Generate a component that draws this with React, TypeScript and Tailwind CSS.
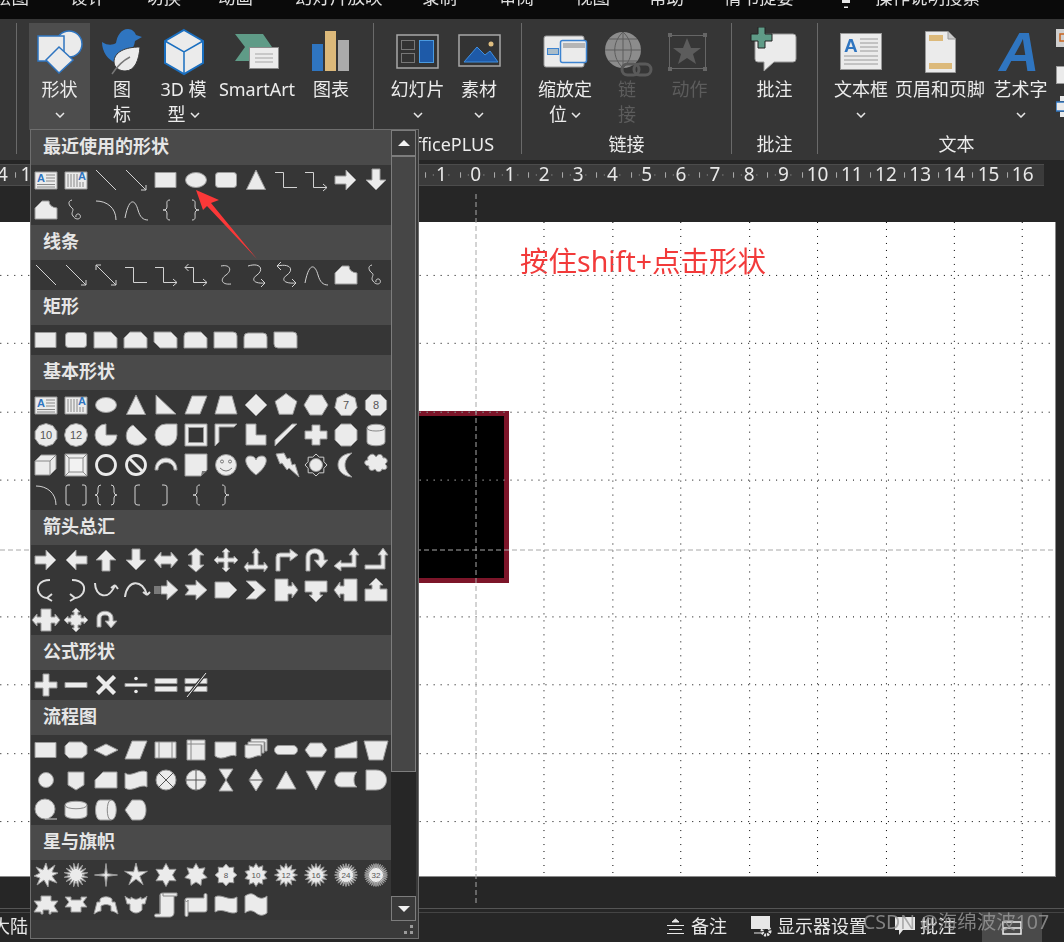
import React from 'react';

const W = '#ebebeb';
const G = '#9a9a9a';
const BLUE = '#2f75c0';

const F = ({ d }: { d: string }) => <path d={d} fill={W} stroke={G} />;
const L = ({ d, c = '#d2d2d2', w = 1 }: { d: string; c?: string; w?: number }) => <path d={d} fill="none" stroke={c} strokeWidth={w} />;
const N = ({ t, s = 9 }: { t: string; s?: number }) => (
  <text x={15} y={15 + s * 0.36} textAnchor="middle" fontSize={s} fill="#555" fontFamily="Liberation Sans, sans-serif">{t}</text>
);

const ngon = (n: number, r: number, rot = 0) =>
  'M' + Array.from({ length: n }, (_, i) => {
    const a = rot + (i * 2 * Math.PI) / n - Math.PI / 2;
    return `${(15 + r * Math.cos(a)).toFixed(1)} ${(15 + r * Math.sin(a)).toFixed(1)}`;
  }).join('L') + 'z';

const star = (n: number, R: number, r: number, rot = 0) =>
  'M' + Array.from({ length: n * 2 }, (_, i) => {
    const a = rot + (i * Math.PI) / n - Math.PI / 2;
    const q = i % 2 ? r : R;
    return `${(15 + q * Math.cos(a)).toFixed(1)} ${(15 + q * Math.sin(a)).toFixed(1)}`;
  }).join('L') + 'z';

const shapes: Record<string, React.ReactNode> = {
  textH: <><path d="M4 7h22v17H4z" fill={W} stroke={G} /><text x={6} y={17} fontSize={11} fontWeight={700} fill={BLUE} fontFamily="Liberation Sans, sans-serif">A</text><L c="#888" d="M15 10h9M15 13h9M15 16h9M6 19.500h18M6 22h18" /></>,
  textV: <><path d="M4 7h22v17H4z" fill={W} stroke={G} /><text x={17} y={15} fontSize={11} fontWeight={700} fill={BLUE} fontFamily="Liberation Sans, sans-serif">A</text><L c="#888" d="M7 9v13M10 9v13M13 9v13M16 9v13M19 17v5M22 17v5" /></>,
  line: <L d="M5 5L25 25" />,
  arrowLine: <L d="M5 5L25 25M25 20v5h-5" />,
  dblLine: <L d="M5 5L25 25M25 20v5h-5M10 5H5v5" />,
  rect: <F d="M4 7.500h21v15H4z" />,
  ellipse: <ellipse cx={15} cy={15} rx={10.500} ry={7.500} fill={W} stroke={G} />,
  rrect: <rect x={4.500} y={7.500} width={21} height={15} rx={3} fill={W} stroke={G} />,
  tri: <F d="M15 5L24.500 24.500H5.500z" />,
  elbow: <L d="M4 7.500H12.500V22.500H26" />,
  elbowA: <L d="M4 7.500H12.500V22.500H26M22 19l4 3.500-4 3.500" />,
  elbowD: <L d="M4 7.500H12.500V22.500H26M22 19l4 3.500-4 3.500M7.500 4L4 7.500 7.500 11" />,
  rArrow: <F d="M4 11H15V5L25 15 15 25V19H4z" />,
  lArrow: <F d="M26 11H15V5L5 15 15 25V19H26z" />,
  uArrow: <F d="M11 26V15H5L15 5 25 15H19V26z" />,
  dArrow: <F d="M11 4V15H5L15 25 25 15H19V4z" />,
  free: <F d="M4 24V13L11 6H18Q18 12 26 13V24z" />,
  scribble: <L d="M11 5C6 6 8 11 11 13C14 15 9 18 12 21C15 26 21 24 19 20C18 18 14 19 15 22" />,
  arc: <L d="M5 6C16 6 25 13 25 25" />,
  curve: <L d="M4 23C8 2 14 4 17 15C19 22 22 25 27 25" />,
  lBrace: <L d="M19 5C15 5 16 8 16 11C16 14 15 15 12 15C15 15 16 16 16 19C16 22 15 25 19 25" />,
  rBrace: <L d="M11 5C15 5 14 8 14 11C14 14 15 15 18 15C15 15 14 16 14 19C14 22 15 25 11 25" />,
  cConn: <L d="M10 6C20 4 21 11 15 15C9 19 10 25 20 24" />,
  cConnA: <L d="M7 6C20 2 23 10 16 15C10 19 12 24 24 23M20 19l4 4-4 4" />,
  cConnD: <L d="M6 6C20 3 23 10 16 15C10 19 12 24 25 23M21 19l4 4-4 4M10 2L6 6l4 4" />,
  snip1: <F d="M3 7h17l6 6v10H3z" />,
  snip2: <F d="M9 7H20l6 6v10H3V13z" />,
  snipD: <F d="M3 7H20l6 6v10H9l-6-6z" />,
  snipR: <F d="M3 11q0-4 4-4H20l6 6v10H3z" />,
  round1: <path d="M3 7H22q4 0 4 4v12H3z" fill={W} stroke={G} />,
  round2: <path d="M7 8H22q4 0 4 4v11H3V12q0-4 4-4z" fill={W} stroke={G} />,
  roundD: <path d="M3 7H22q4 0 4 4v12H7q-4 0-4-4z" fill={W} stroke={G} />,
  rtTri: <F d="M5 5L25 24H5z" />,
  para: <F d="M11 6H26L19 24H4z" />,
  trap: <F d="M9 6H21L26 24H4z" />,
  diamond: <F d="M15 4L26 15 15 26 4 15z" />,
  pent: <F d={ngon(5, 11.500)} />,
  hex: <F d="M9 5H21L27 15 21 25H9L3 15z" />,
  hept: <><F d={ngon(7, 11.500)} /><N t="7" s={11} /></>,
  oct: <><F d={ngon(8, 11.500, Math.PI / 8)} /><N t="8" s={11} /></>,
  dec: <><F d={ngon(10, 11.500)} /><N t="10" s={11} /></>,
  dodec: <><F d={ngon(12, 11.500)} /><N t="12" s={11} /></>,
  pie: <F d="M15 4A11 11 0 1 0 26 15H15z" />,
  chord: <F d="M12 5C5 8 3 18 8 23C14 27 22 26 26 19z" />,
  drop: <path d="M26 4V15A11 11 0 1 1 15 4z" fill={W} stroke={G} />,
  frame: <path d="M4 4H26V26H4zM7.500 7.500V22.500H22.500V7.500z" fill={W} stroke={G} fillRule="evenodd" />,
  halfFrame: <F d="M4 4H26L23 7H8V22L4 26z" />,
  lShape: <F d="M5 4H15V15H25V25H5z" />,
  stripe: <F d="M4 20L21 4H26L4 26z" />,
  cross: <F d="M11 5H19V11H26V19H19V25H11V19H4V11H11z" />,
  plaque: <F d="M10 4H20L26 10V20L20 26H10L4 20V10z" />,
  can: <><path d="M6 8C6 3 24 3 24 8V22C24 27 6 27 6 22z" fill={W} stroke={G} /><L c="#888" d="M6 8C6 12 24 12 24 8" /></>,
  cube: <><F d="M4 11L10 5H25V19L19 25H4z" /><L c="#888" d="M4 11H19V25M19 11L25 5" /></>,
  bevel: <><F d="M4 4H26V26H4z" /><path d="M8 8H22V22H8z" fill="#f2f2f2" stroke="#888" /><L c="#888" d="M4 4L8 8M26 4L22 8M4 26L8 22M26 26L22 22" /></>,
  donut: <circle cx={15} cy={15} r={9.500} fill="none" stroke={W} strokeWidth={2.800} />,
  no: <><circle cx={15} cy={15} r={9.500} fill="none" stroke={W} strokeWidth={2.800} /><path d="M9 9L21 21" stroke={W} strokeWidth={2.800} /></>,
  blockArc: <path d="M4 20C4 4 26 4 26 20H23C23 10 7 10 7 20z" fill={W} stroke={G} />,
  fold: <><F d="M4 4H26V20L20 26H4z" /><path d="M20 26L21 21H26z" fill="#777" /></>,
  smile: <><circle cx={15} cy={15} r={10.500} fill={W} stroke={G} /><circle cx={11} cy={11.500} r={1.500} fill="none" stroke="#777" /><circle cx={19} cy={11.500} r={1.500} fill="none" stroke="#777" /><L c="#777" d="M9 18Q15 24 21 18" /></>,
  heart: <F d="M15 25C2 15 3 6 9 6C12 6 14 7 15 10C16 7 18 6 21 6C27 6 28 15 15 25z" />,
  bolt: <F d="M5 4L13 3 16 9 19 8 21 15 24 14 28 27 18 18 16 20 11 13 9 14z" />,
  sun: <><circle cx={15} cy={15} r={6.500} fill={W} stroke={G} /><path d={star(8, 11, 8.500)} fill="none" stroke="#cfcfcf" /></>,
  moon: <F d="M21 3C10 4 7 10 7 15C7 20 11 26 21 27C16 23 14 19 14 15C14 11 16 7 21 3z" />,
  cloud: <F d="M9 5C12 3 14 5 15 7C17 3 22 4 22 8C26 7 28 12 24 14C28 17 25 21 21 19C20 23 15 22 14 19C11 22 7 20 8 16C3 16 2 10 7 10C6 8 7 6 9 5z" />,
  brackets: <L d="M9 5H7Q5 5 5 7V23Q5 25 7 25H9M21 5H23Q25 5 25 7V23Q25 25 23 25H21" />,
  braces: <L d="M10 5Q7 5 7 8V12Q7 15 4 15Q7 15 7 18V22Q7 25 10 25M20 5Q23 5 23 8V12Q23 15 26 15Q23 15 23 18V22Q23 25 20 25" />,
  lBracket: <L d="M19 5H17Q14 5 14 7V23Q14 25 17 25H19" />,
  rBracket: <L d="M11 5H13Q16 5 16 7V23Q16 25 13 25H11" />,
  lrArrow: <F d="M3 15L10 7V11H20V7L27 15 20 23V19H10V23z" />,
  udArrow: <F d="M15 3L23 10H19V20H23L15 27 7 20H11V10H7z" />,
  quad: <F d="M15 3L19 7H17V13H23V11L27 15 23 19V17H17V23H19L15 27 11 23H13V17H7V19L3 15 7 11V13H13V7H11z" />,
  lru: <F d="M15 3L19 8H17V20H23V17L27 22 23 27V24H7V27L3 22 7 17V20H13V8H11z" />,
  bent: <F d="M5 26V12Q5 8 9 8H19V4L27 10 19 16V12H9V26z" />,
  uturn: <F d="M5 26V12C5 1 23 1 23 12V15H27L20 23 13 15H18V12C18 7 9 7 9 12V26z" />,
  lUp: <F d="M3 21L10 15V18H21V10H18L23 3 28 10H25V22H10V26z" />,
  bentUp: <F d="M4 20H20V10H17L22 3 27 10H24V24H4z" />,
  crvR: <L w={2} d="M19 5C8 5 5 12 8 18C10 21 13 23 16 23M16 23l5-4M16 23l5 3" c="#dedede" />,
  crvL: <L w={2} d="M11 5C22 5 25 12 22 18C20 21 17 23 14 23M14 23l-5-4M14 23l-5 3" c="#dedede" />,
  crvU: <L w={2} d="M4 8C4 22 18 26 24 10M24 10l-4 3M24 10l3 4" c="#dedede" />,
  crvD: <L w={2} d="M4 22C6 4 22 4 26 20M26 20l-4-3M26 20l3-3" c="#dedede" />,
  stripeR: <><F d="M10 11H16V5L27 15 16 25V19H10z" /><L c="#bdbdbd" d="M4 11V19M6 11V19M8 11V19" /></>,
  notch: <F d="M4 10H15V5L26 15 15 25V20H4L8 15z" />,
  home: <F d="M4 7H18L26 15 18 23H4z" />,
  chevron: <F d="M5 6H15L25 15 15 24H5L14 15z" />,
  rCall: <F d="M4 4H17V11H21V7L27 15 21 23V19H17V26H4z" />,
  dCall: <F d="M4 6H26V17H19V20H22L15 27 8 20H11V17H4z" />,
  lCall: <F d="M26 4H13V11H9V7L3 15 9 23V19H13V26H26z" />,
  uCall: <F d="M4 26V14H11V10H8L15 3 22 10H19V14H26V26z" />,
  lrCall: <F d="M10 4H20V12H24V9L29 15 24 21V18H20V26H10V18H6V21L1 15 6 9V12H10z" />,
  quadCall: <F d="M15 3L19 7H17V10H20V13H23V11L27 15 23 19V17H20V20H17V23H19L15 27 11 23H13V20H10V17H7V19L3 15 7 11V13H10V10H13V7H11z" />,
  circ: <F d="M6 22V13C6 4 22 4 22 13V16H26L20 23 14 16H18V13C18 9 10 9 10 13V22z" />,
  plus: <F d="M12 4H18V12H26V18H18V26H12V18H4V12H12z" />,
  minus: <F d="M4 12.500H26V17.500H4z" />,
  times: <F d="M8 5L15 12 22 5 25 8 18 15 25 22 22 25 15 18 8 25 5 22 12 15 5 8z" />,
  div: <><F d="M4 13.500H26V16.500H4z" /><circle cx={15} cy={8.500} r={1.800} fill={W} /><circle cx={15} cy={21.500} r={1.800} fill={W} /></>,
  eq: <><F d="M4 8.500H26V13.500H4z" /><F d="M4 16.500H26V21.500H4z" /></>,
  neq: <><F d="M4 8.500H26V13.500H4z" /><F d="M4 16.500H26V21.500H4z" /><path d="M6 27L25 3" stroke="#333" strokeWidth={3} /><path d="M6 27L25 3" stroke={W} /></>,
  altProc: <F d="M8 7H21L26 11V19L21 23H8L4 19V11z" />,
  fDiamond: <F d="M15 9L27 15 15 21 3 15z" />,
  fData: <F d="M11 6H26L19 24H4z" />,
  predef: <><F d="M4 7H25V23H4z" /><L c="#888" d="M8 7V23M21 7V23" /></>,
  internal: <><F d="M6 5H24V25H6z" /><L c="#888" d="M10 5V25M6 9H24" /></>,
  doc: <F d="M4 7H25V21C19 18 12 27 4 21z" />,
  mdoc: <><F d="M10 4H26V16H24V7H10z" /><F d="M7 7H23V18H21V10H7z" /><F d="M4 10H20V21C15 19 9 26 4 22z" /></>,
  term: <rect x={3.500} y={10.500} width={23} height={9} rx={4.500} fill={W} stroke={G} />,
  prep: <F d="M9 8H21L26 15 21 22H9L4 15z" />,
  manIn: <F d="M4 13L26 6V23H4z" />,
  manOp: <F d="M3 6H27L22 25H8z" />,
  conn: <circle cx={15} cy={15} r={7.500} fill={W} stroke={G} />,
  offp: <F d="M7 7H23V20L15 25 7 20z" />,
  card: <F d="M12 7H26V23H4V15z" />,
  tape: <F d="M4 8C10 13 19 3 26 7V22C20 18 11 28 4 23z" />,
  sumJ: <><circle cx={15} cy={15} r={10} fill={W} stroke={G} /><L c="#555" d="M8 8L22 22M22 8L8 22" /></>,
  orS: <><circle cx={15} cy={15} r={10} fill={W} stroke={G} /><L c="#555" d="M15 5V25M5 15H25" /></>,
  collate: <F d="M8 4H22L8 26H22z" />,
  sort: <><F d="M15 4L22 15 15 26 8 15z" /><L c="#555" d="M8 15H22" /></>,
  extract: <F d="M15 6L25 24H5z" />,
  merge: <F d="M5 6H25L15 25z" />,
  stored: <F d="M10 7H26C22 10 22 20 26 22H10C5 22 3 17 4 14C5 10 7 7 10 7z" />,
  delay: <path d="M5 5H15C29 5 29 25 15 25H5z" fill={W} stroke={G} />,
  seq: <><circle cx={14} cy={14} r={10} fill={W} stroke={G} /><L d="M14 24H26" /></>,
  disk: <><path d="M4 10C4 5 26 5 26 10V20C26 25 4 25 4 20z" fill={W} stroke={G} /><L c="#888" d="M4 10C4 15 26 15 26 10" /></>,
  direct: <><path d="M9 5H20C27 5 27 25 20 25H9C3 25 3 5 9 5z" fill={W} stroke={G} /><L c="#888" d="M20 5C15 5 15 25 20 25" /></>,
  display: <F d="M11 5H19C27 5 27 25 19 25H11L4 15z" />,
  exp1: <F d="M15 3L17 10 24 5 21 12 27 13 21 16 26 23 18 20 17 27 13 20 6 25 9 18 3 16 9 13 5 7 12 10z" />,
  exp2: <F d={star(16, 12, 6, 0.200)} />,
  s4: <F d={star(4, 11.500, 1.800)} />,
  s5: <F d={star(5, 12, 4)} />,
  s6: <F d={star(6, 11.500, 6.500)} />,
  s7: <F d={star(7, 11.500, 7)} />,
  s8: <><F d={star(8, 11, 8)} /><N t="8" s={8} /></>,
  s10: <><F d={star(10, 11.500, 8)} /><N t="10" s={8} /></>,
  s12: <><F d={star(12, 11.500, 7)} /><N t="12" s={8} /></>,
  s16: <><F d={star(16, 11.500, 7)} /><N t="16" s={8} /></>,
  s24: <><F d={star(24, 11.500, 7)} /><N t="24" s={8} /></>,
  s32: <><F d={star(32, 11.500, 7)} /><N t="32" s={8} /></>,
  rbnU: <F d="M10 6H20V11H27L23 16 27 22H20V24H18V20H12V24H10V22H3L7 16 3 11H10z" />,
  rbnD: <F d="M4 7H10V10H20V7H26L22 12 26 17H20V22H10V17H4L8 12z" />,
  rbnCU: <F d="M9 9C12 6 18 6 21 9V12H24L27 24C24 22 22 21 20 21V16C16 14 14 14 10 16V21C8 21 6 22 3 24L6 12H9z" />,
  rbnCD: <F d="M4 6C6 8 8 9 10 9V7C14 10 16 10 20 7V9C22 9 24 8 26 6L24 14H21V20C17 24 13 24 9 20V14H6z" />,
  vscroll: <><F d="M9 5C9 3 12 3 12 3H26V6H23V23C23 26 20 27 19 27H5C3 27 3 24 5 24H9z" /><L c="#888" d="M9 5V24M12 3V6H23" /></>,
  hscroll: <><F d="M4 10C4 8 6 8 7 8H23V5C23 3 26 3 26 5V20C26 22 24 22 23 22H7V25C7 27 4 27 4 25z" /><L c="#888" d="M4 10C4 12 7 12 7 10V22" /></>,
  wave: <F d="M4 7C10 3 18 12 26 7V22C20 26 12 17 4 22z" />,
  dwave: <F d="M4 6C9 3 11 3 15 6C19 9 22 9 26 6V23C22 26 19 26 15 23C11 20 8 20 4 23z" />,
};

type Sec = { title: string; rows: string[] };

const sections: Sec[] = [
  { title: '最近使用的形状', rows: ['textH textV line arrowLine rect ellipse rrect tri elbow elbowA rArrow dArrow', 'free scribble arc curve lBrace rBrace'] },
  { title: '线条', rows: ['line arrowLine dblLine elbow elbowA elbowD cConn cConnA cConnD curve free scribble'] },
  { title: '矩形', rows: ['rect rrect snip1 snip2 snipD snipR round1 round2 roundD'] },
  { title: '基本形状', rows: [
    'textH textV ellipse tri rtTri para trap diamond pent hex hept oct',
    'dec dodec pie chord drop frame halfFrame lShape stripe cross plaque can',
    'cube bevel donut no blockArc fold smile heart bolt sun moon cloud',
    'arc brackets braces lBracket rBracket lBrace rBrace',
  ] },
  { title: '箭头总汇', rows: [
    'rArrow lArrow uArrow dArrow lrArrow udArrow quad lru bent uturn lUp bentUp',
    'crvR crvL crvU crvD stripeR notch home chevron rCall dCall lCall uCall',
    'lrCall quadCall circ',
  ] },
  { title: '公式形状', rows: ['plus minus times div eq neq'] },
  { title: '流程图', rows: [
    'rect altProc fDiamond fData predef internal doc mdoc term prep manIn manOp',
    'conn offp card tape sumJ orS collate sort extract merge stored delay',
    'seq disk direct display',
  ] },
  { title: '星与旗帜', rows: [
    'exp1 exp2 s4 s5 s6 s7 s8 s10 s12 s16 s24 s32',
    'rbnU rbnD rbnCU rbnCD vscroll hscroll wave dwave',
  ] },
];

const ShapeRow = ({ names }: { names: string }) => (
  <div className="flex h-[30px]">
    {names.split(' ').map((n, i) => (
      <svg key={i} viewBox="0 0 30 30" className="h-[30px] w-[30px] shrink-0">{shapes[n]}</svg>
    ))}
  </div>
);

const Chevron = () => (
  <svg viewBox="0 0 10 6" className="h-[6px] w-[10px]"><path d="M1 1l4 4 4-4" fill="none" stroke="#e8e8e8" strokeWidth={1.500} /></svg>
);

// one ribbon button: the icon svg uses page coordinates through its viewBox
const RibbonBtn = ({ width, left, lines, chevron, inline, active, dim, children }: {
  width: string; left: number; lines: string[]; chevron?: boolean; inline?: boolean; active?: boolean; dim?: boolean; children: React.ReactNode;
}) => {
  const w = parseInt(width.replace(/\D/g, ''), 10);
  return (
    <div className={`flex h-[107px] shrink-0 flex-col items-center ${width} ${active ? 'bg-[#4d4d4d]' : ''}`}>
      <svg viewBox={`${left} 27 ${w} 50`} className="mt-[4px] h-[50px] w-full shrink-0">{children}</svg>
      {lines.map((t, i) => (
        <div key={i} className={`flex h-[25px] items-center gap-1 whitespace-nowrap text-[18px] leading-[25px] ${dim ? 'text-[#5c5c5c]' : 'text-[#ececec]'}`}>
          {t}
          {inline && i === lines.length - 1 && <Chevron />}
        </div>
      ))}
      {chevron && <div className="flex h-[25px] items-center"><Chevron /></div>}
    </div>
  );
};

const GroupLabel = ({ shift, children }: { shift: string; children: React.ReactNode }) => (
  <div className={`mb-[2px] mt-auto whitespace-nowrap text-center text-[18px] leading-[16px] text-[#ececec] ${shift}`}>{children}</div>
);

const RulerCell = ({ n }: { n: number }) => (
  <div className="relative flex h-full w-[34.2px] shrink-0 items-center justify-center">
    <svg viewBox="0 0 34.2 22" className="absolute inset-0 h-full w-full">
      <path d="M0 8V14M8.550 10.500V11.500M25.650 10.500V11.500" stroke="#b8b8b8" fill="none" />
    </svg>
    <span className="relative mb-[2px] bg-[#3b3b3b] text-[19px] leading-[20px] text-[#e8e8e8]">{n}</span>
  </div>
);

const rulerNums = [14, 13, 12, 11, 10, 9, 8, 7, 6, 5, 4, 3, 2, 1, 0, 1, 2, 3, 4, 5, 6, 7, 8, 9, 10, 11, 12, 13, 14, 15, 16];
const gridX = [66, 134, 203, 271, 339, 408, 544, 613, 681, 750, 818, 887, 955, 1023];
const gridY = [275, 343, 412, 480, 617, 685, 754, 822];

export default function App() {
  return (
    <div className="relative h-[942px] w-[1064px] overflow-hidden bg-[#262626] font-['Noto_Sans','Noto_Sans_CJK_SC',sans-serif]">
      {/* Title tabs, cut off by the top of the shot */}
      <div className="flex h-[19px] items-start overflow-hidden bg-[#0a0a0a] text-[17.500px] leading-[24px] text-[#e0e0e0]">
        <div className="mt-[-15px] flex items-start whitespace-nowrap">
          <span className="ml-[-6px]">绘图</span>
          <span className="ml-[41px]">设计</span>
          <span className="ml-[41px]">切换</span>
          <span className="ml-[37px]">动画</span>
          <span className="ml-[42px]">幻灯片放映</span>
          <span className="ml-[39.500px]">录制</span>
          <span className="ml-[42px]">审阅</span>
          <span className="ml-[41px]">视图</span>
          <span className="ml-[39px]">帮助</span>
          <span className="ml-[40px]">情书提要</span>
          <svg viewBox="0 0 10 8" className="ml-[47px] mt-[15px] h-[8px] w-[10px]"><path d="M1 0H9V3H1zM3 6.500H7V8H3z" fill="#e8e8e8" /></svg>
          <span className="ml-[24px]">操作说明搜索</span>
        </div>
      </div>

      {/* Ribbon */}
      <div className="flex h-[141px] items-start overflow-hidden bg-[#363636] pl-[16px] pt-[4px]">
        <div className="flex h-[131px] w-[358px] shrink-0 flex-col border-x border-[#6a6a6a] pl-[12px]">
          <div className="flex">
            <RibbonBtn width="w-[61px]" left={29} lines={['形状']} chevron active>
              <circle cx={69} cy={44} r={13} fill={W} stroke={BLUE} strokeWidth={1.500} />
              <rect x={38} y={36} width={26} height={25} fill={W} stroke={BLUE} strokeWidth={1.500} />
              <path d="M59 47L73 60 59 73 46 60z" fill={W} stroke={BLUE} strokeWidth={1.500} />
            </RibbonBtn>
            <RibbonBtn width="w-[64px]" left={90} lines={['图', '标']}>
              <path d="M102 42C108 46 113 45 116 43C117 36 121 29 128 29C132 29 135 32 136 35L142 37 135 41C134 50 128 53 122 56C119 58 117 61 116 63C108 60 102 52 102 42z" fill={BLUE} />
              <path d="M140 47C125 47 114 52 114 62C114 68 120 71 125 71C135 71 139 60 140 47z" fill={W} stroke="#363636" />
              <path d="M112 74C118 65 124 60 130 57" fill="none" stroke="#777" strokeWidth={1.500} />
            </RibbonBtn>
            <RibbonBtn width="w-[59px]" left={154} lines={['3D 模', '型']} inline>
              <path d="M184 30L203 41V63L184 74 165 63V41z" fill={W} stroke="#1a6fc0" strokeWidth={2} />
              <path d="M165 41L184 52 203 41M184 52V74" fill="none" stroke="#1a6fc0" strokeWidth={1.500} />
            </RibbonBtn>
            <RibbonBtn width="w-[88px]" left={213} lines={['SmartArt']}>
              <path d="M235 34H263L272 47V61H235L245 47z" fill="#5f9b87" />
              <rect x={249.500} y={47.500} width={29} height={21} fill={W} stroke="#8a8a8a" />
              <path d="M255 54H273M255 58H273M255 62H273" stroke="#a5a5a5" fill="none" />
            </RibbonBtn>
            <RibbonBtn width="w-[60px]" left={301} lines={['图表']}>
              <rect x={312} y={44} width={11} height={27} fill={BLUE} />
              <rect x={325} y={31} width={11} height={40} fill="#dcb97a" />
              <rect x={338} y={40} width={11} height={31} fill="#ababab" />
            </RibbonBtn>
          </div>
        </div>

        <div className="flex h-[131px] w-[148px] shrink-0 flex-col border-r border-[#6a6a6a] pl-[11px]">
          <div className="flex">
            <RibbonBtn width="w-[65px]" left={385} lines={['幻灯片']} chevron>
              <rect x={397} y={35} width={41} height={33} fill="#333" stroke="#a8a8a8" strokeWidth={1.500} />
              <rect x={401.500} y={40.500} width={13} height={9} fill="none" stroke="#777" />
              <rect x={401.500} y={53.500} width={13} height={9} fill="none" stroke="#777" />
              <rect x={419.500} y={40.500} width={14} height={22} fill="#1e5aa8" stroke="#4a9ae0" />
            </RibbonBtn>
            <RibbonBtn width="w-[58px]" left={450} lines={['素材']} chevron>
              <rect x={459} y={35} width={41} height={31} fill="#333" stroke="#a8a8a8" strokeWidth={1.500} />
              <path d="M464 62L477 47 485 55 490 51 498 62z" fill="#1e5aa8" stroke="#3f8fe0" />
              <circle cx={491} cy={44} r={2.500} fill="#e0be80" />
            </RibbonBtn>
          </div>
          <GroupLabel shift="ml-[-11px]">OfficePLUS</GroupLabel>
        </div>

        <div className="flex h-[131px] w-[210px] shrink-0 flex-col border-r border-[#6a6a6a] pl-[8px]">
          <div className="flex">
            <RibbonBtn width="w-[70px]" left={530} lines={['缩放定', '位']} inline>
              <rect x={544} y={36} width={40} height={31} rx={2} fill={W} stroke="#999" />
              <rect x={560.500} y={40.500} width={26} height={22} rx={2} fill={W} stroke="#3c83d0" strokeWidth={1.500} />
              <rect x={563} y={43} width={22} height={5} fill="#b5b5b5" />
              <rect x={547.500} y={48.500} width={11} height={6} fill="#a9bcc9" stroke="#3c83d0" />
            </RibbonBtn>
            <RibbonBtn width="w-[54px]" left={600} lines={['链', '接']} dim>
              <circle cx={623} cy={50} r={18} fill="#8c8c8c" />
              <path d="M605 50H641M623 32V68M609 39H637M609 61H637M623 32C612 42 612 58 623 68M623 32C634 42 634 58 623 68" fill="none" stroke="#5c5c5c" />
              <rect x={622} y={64} width={17} height={11} rx={5.500} fill="none" stroke="#5a5a5a" strokeWidth={3} />
              <rect x={634} y={64} width={17} height={11} rx={5.500} fill="none" stroke="#5a5a5a" strokeWidth={3} />
            </RibbonBtn>
            <RibbonBtn width="w-[71px]" left={654} lines={['动作']} dim>
              <rect x={669.500} y={35.500} width={36} height={33} fill="none" stroke="#666" />
              <path d="M668 33h4v4h-4zM703 33h4v4h-4zM668 67h4v4h-4zM703 67h4v4h-4z" fill="#666" />
              <path d="M687 38L691 48 701 48 693 54 696 64 687 58 678 64 681 54 673 48 683 48z" fill="#5c5c5c" />
            </RibbonBtn>
          </div>
          <GroupLabel shift="ml-[-8px]">链接</GroupLabel>
        </div>

        <div className="flex h-[131px] w-[86px] shrink-0 flex-col border-r border-[#6a6a6a]">
          <div className="flex">
            <RibbonBtn width="w-[85px]" left={732} lines={['批注']}>
              <path d="M758 34H793Q796 34 796 37V59Q796 62 793 62H774L764 71V62H758Q755 62 755 59V37Q755 34 758 34z" fill={W} stroke="#999" />
              <path d="M758 27H765V34H772V41H765V48H758V41H751V34H758z" fill="#5f9b87" stroke="#222" />
            </RibbonBtn>
          </div>
          <GroupLabel shift="ml-0">批注</GroupLabel>
        </div>

        <div className="flex h-[131px] w-[277px] shrink-0 flex-col pl-[9px]">
          <div className="flex">
            <RibbonBtn width="w-[68px]" left={827} lines={['文本框']} chevron>
              <rect x={840.500} y={33.500} width={41} height={36} fill={W} stroke="#999" />
              <text x={844} y={52} fontSize={19} fontWeight={700} fill={BLUE} fontFamily="Liberation Sans, sans-serif">A</text>
              <path d="M860 39H878M860 43H878M860 47H878M860 51H878M844 56H878M844 60H878M844 64H878" stroke="#9a9a9a" fill="none" />
            </RibbonBtn>
            <RibbonBtn width="w-[90px]" left={895} lines={['页眉和页脚']}>
              <path d="M925.500 31.500H948L955.500 39V72.500H925.500z" fill={W} stroke="#999" />
              <path d="M948 31.500V39H955.500" fill="#ccc" stroke="#999" />
              <rect x={929} y={35} width={14} height={6} fill="#dcb97a" />
              <rect x={929} y={63} width={23} height={6} fill="#dcb97a" />
            </RibbonBtn>
            <RibbonBtn width="w-[71px]" left={985} lines={['艺术字']} chevron>
              <text x={999} y={71} fontSize={56} fontWeight={700} fontStyle="italic" fill={BLUE} fontFamily="Liberation Sans, sans-serif">A</text>
            </RibbonBtn>
            <svg viewBox="1056 27 20 100" className="mt-[4px] h-[100px] w-[20px] shrink-0">
              <rect x={1056} y={29} width={12} height={18} fill="#cfcfcf" />
              <rect x={1060} y={34} width={6} height={7} fill="none" stroke="#c9641e" strokeWidth={1.500} />
              <rect x={1056.500} y={66.500} width={12} height={17} fill={W} stroke="#999" />
              <rect x={1060} y={96} width={6} height={5} fill={W} />
              <rect x={1056} y={102} width={10} height={9} fill={W} stroke={BLUE} strokeWidth={1.500} />
              <rect x={1060} y={112} width={6} height={5} fill={W} />
            </svg>
          </div>
          <GroupLabel shift="ml-[-9px]">文本</GroupLabel>
        </div>
      </div>

      {/* Ruler */}
      <div className="mt-[4px] h-[22px] w-[1044px] overflow-hidden border-y border-[#4c4c4c] bg-[#3b3b3b]">
        <div className="ml-[-20px] flex h-full">
          {rulerNums.map((n, i) => <RulerCell key={i} n={n} />)}
        </div>
      </div>

      {/* Canvas with the slide */}
      <div className="relative h-[722px] pt-[36px]">
        <div className="relative h-[655px] w-[1056px] overflow-hidden border-b border-r border-[#8a8a8a] bg-white">
          <div className="absolute left-[300px] top-[189px] h-[172px] w-[209px] border-[5px] border-[#7c1529] bg-black" />
          <div className="absolute left-[520px] top-[19px] whitespace-nowrap text-[28.500px] leading-[40px] text-[#f23a3a]">按住shift+点击形状</div>
          <svg viewBox="0 222 1056 655" className="absolute inset-0 h-full w-full mix-blend-difference">
            {gridX.map(x => <line key={x} x1={x + 0.500} x2={x + 0.500} y1={222} y2={876} stroke="#fff" strokeDasharray="1 6" />)}
            {gridY.map(y => <line key={y} y1={y + 0.500} y2={y + 0.500} x1={0} x2={1056} stroke="#fff" strokeDasharray="1 6" />)}
          </svg>
        </div>
        <svg viewBox="0 185 1064 722" className="absolute inset-0 h-full w-full">
          <line x1={476} x2={476} y1={193} y2={905} stroke="#a8a8a8" strokeDasharray="5 3" />
          <line y1={549} y2={549} x1={0} x2={1056} stroke="#a8a8a8" strokeDasharray="5 3" />
        </svg>
      </div>

      {/* Status bar */}
      <div className="flex h-[35px] items-center border-t border-[#555] bg-[#262626] text-[18px] leading-[24px] text-[#e8e8e8] shadow-[inset_0_3px_0_#262626,inset_0_4px_0_#444]">
        <span className="ml-[-8px] w-[37px] whitespace-nowrap">大陆</span>
        <svg viewBox="0 0 17 16" className="ml-[638px] h-[16px] w-[17px]"><path d="M8.500 1L5 4H12zM0 7.500H17M2 11.500H15M0 15.500H17" fill="#e8e8e8" stroke="#e8e8e8" /></svg>
        <span className="ml-[7px]">备注</span>
        <svg viewBox="0 0 23 22" className="ml-[23px] h-[22px] w-[23px]">
          <path d="M1 1H20V14H1z" fill="#e8e8e8" />
          <path d="M4 18H11" stroke="#e8e8e8" />
          <circle cx={16} cy={16} r={4} fill="none" stroke="#e8e8e8" strokeWidth={3} strokeDasharray="2 1" />
        </svg>
        <span className="ml-[4px]">显示器设置</span>
        <svg viewBox="0 0 22 20" className="ml-[27px] h-[20px] w-[22px]"><path d="M1 1H21V14H9L5 19V14H1z" fill="#e8e8e8" /></svg>
        <span className="ml-[4px]">批注</span>
        <div className="ml-[26px] flex h-[31px] w-[60px] items-center justify-center self-end bg-[#4a4a4a]">
          <svg viewBox="0 0 20 14" className="h-[14px] w-[20px]"><path d="M1 1H19V13H1zM1 7H19" fill="none" stroke="#f0f0f0" strokeWidth={1.500} /></svg>
        </div>
      </div>

      {/* Watermark */}
      <div className="absolute left-[863px] top-[908px] whitespace-nowrap text-[19.500px] leading-[28px] text-[#9a9a9a]/80">CSDN @海绵波波107</div>

      {/* Shapes dropdown */}
      <div className="absolute left-[30px] top-[129px] h-[810px] w-[389px] border border-[#6e6e6e] bg-[#3a3a3a]">
        <div className="flex h-[791px]">
          <div className="w-[360px] shrink-0">
            {sections.map(s => (
              <div key={s.title}>
                <div className="flex h-[35px] items-center bg-[#4a4a4a] pb-[3px] pl-[12px] text-[18px] font-bold leading-[24px] text-[#e6e6e6]">{s.title}</div>
                <div className="bg-[#363636]">
                  {s.rows.map((r, i) => <ShapeRow key={i} names={r} />)}
                </div>
              </div>
            ))}
          </div>
          <div className="flex w-[25px] shrink-0 flex-col bg-[#262626]">
            <div className="flex h-[26px] items-center justify-center border border-[#7d7d7d] bg-[#3a3a3a]">
              <svg viewBox="0 0 12 6" className="h-[6px] w-[12px]"><path d="M0 6L6 0 12 6z" fill="#f2f2f2" /></svg>
            </div>
            <div className="h-[616px] border border-[#7d7d7d] bg-[#464646]" />
            <div className="flex-1" />
            <div className="flex h-[25px] items-center justify-center border border-[#7d7d7d] bg-[#3a3a3a]">
              <svg viewBox="0 0 12 6" className="h-[6px] w-[12px]"><path d="M0 0L6 6 12 0z" fill="#f2f2f2" /></svg>
            </div>
          </div>
        </div>
        <div className="flex h-[17px] items-center justify-end pr-[5px]">
          <svg viewBox="0 0 9 9" className="h-[9px] w-[9px]"><path d="M6 0h3v3H6zM0 6h3v3H0zM6 6h3v3H6z" fill="#9a9a9a" /></svg>
        </div>
      </div>

      {/* Red arrow annotation */}
      <svg viewBox="0 0 1064 942" className="pointer-events-none absolute inset-0 h-full w-full">
        <path d="M257 259L211 203 219 200 196 190 203 210 207 206z" fill="#fb3838" />
      </svg>
    </div>
  );
}
